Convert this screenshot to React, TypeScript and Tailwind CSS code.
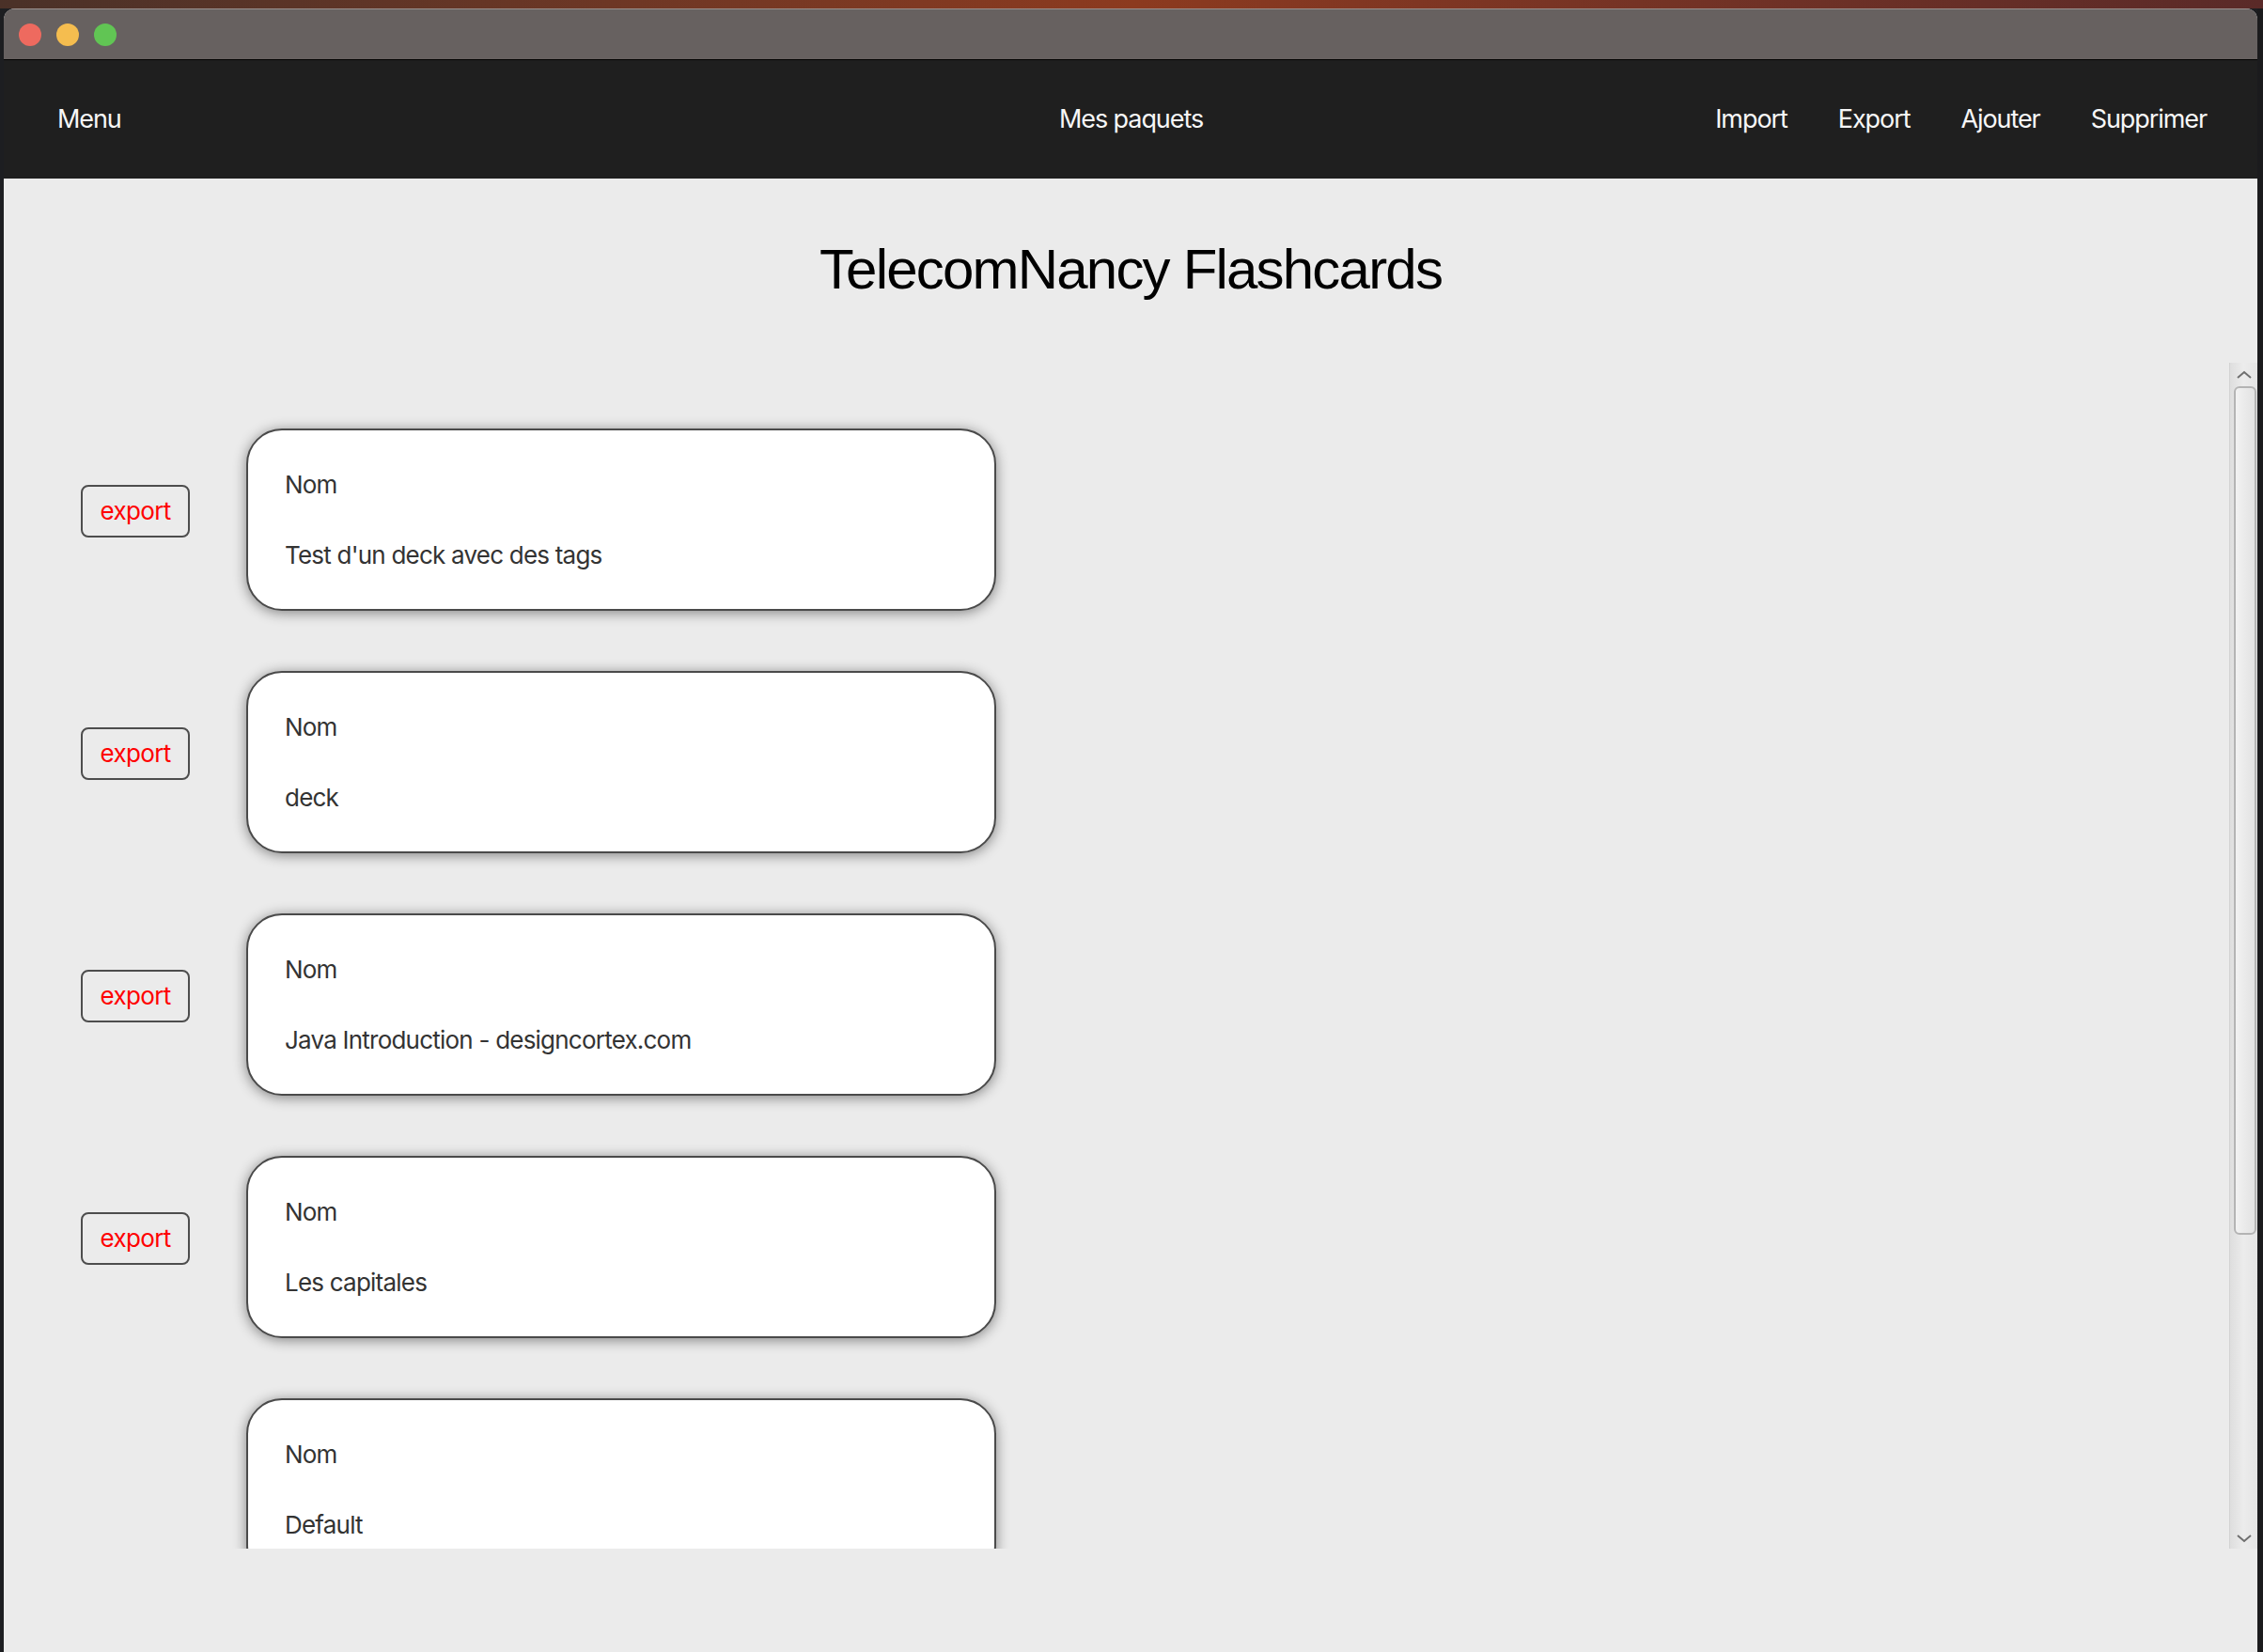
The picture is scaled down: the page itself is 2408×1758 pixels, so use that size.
import React from 'react';

const decks = [
  { name: "Test d'un deck avec des tags", exportable: true },
  { name: 'deck', exportable: true },
  { name: 'Java Introduction - designcortex.com', exportable: true },
  { name: 'Les capitales', exportable: true },
  { name: 'Default', exportable: false },
];

const navRight = ['Import', 'Export', 'Ajouter', 'Supprimer'];

const DeckRow: React.FC<{ name: string; exportable: boolean }> = ({ name, exportable }) => (
  <div className="flex items-start">
    <div className="w-[258px] shrink-0 pl-[82px] pt-[60px]">
      {exportable && (
        <button className="w-[116px] h-[56px] rounded-[8px] border-2 border-[#4d4d4d] bg-transparent text-[26px] text-[#ff0000] tracking-[-0.025em] flex items-center justify-center pb-[2px]">
          export
        </button>
      )}
    </div>
    <div className="w-[798px] h-[194px] shrink-0 rounded-[38px] border-2 border-[#4a4a4a] bg-white shadow-[0_2px_14px_rgba(0,0,0,0.45)] pl-[39px] pt-[42px] text-[26px] leading-[32px] text-[#333333] tracking-[-0.03em]">
      <div>Nom</div>
      <div className="mt-[43px]">{name}</div>
    </div>
  </div>
);

const Chevron: React.FC<{ down?: boolean }> = ({ down }) => (
  <svg width="18" height="10" viewBox="0 0 18 10" className="block">
    <path
      d={down ? 'M2 2 L9 8 L16 2' : 'M2 8 L9 2 L16 8'}
      fill="none"
      stroke="#6f6f6f"
      strokeWidth="2"
    />
  </svg>
);

export default function App() {
  return (
    <div
      className="w-[2408px] h-[1758px] overflow-hidden bg-[#1d1e21] flex flex-col"
      style={{ fontFamily: 'Inter, "Noto Sans", sans-serif' }}
    >
      <div className="h-[9px] shrink-0 bg-gradient-to-r from-[#4a3128] via-[#8c3a1f] to-[#5a2a28]" />
      <div className="flex flex-1 min-h-0 pl-[4px]">
        <div className="w-[2398px] flex flex-col rounded-t-[12px] overflow-hidden bg-[#ebebeb]">
          {/* title bar */}
          <div className="h-[55px] shrink-0 bg-[#676160] border-t border-[#9a9290] border-b border-b-black flex items-center pl-[16px] gap-[16px]">
            <span className="w-[24px] h-[24px] rounded-full bg-[#ee6a5f]" />
            <span className="w-[24px] h-[24px] rounded-full bg-[#f5bd4f]" />
            <span className="w-[24px] h-[24px] rounded-full bg-[#61c554]" />
          </div>

          {/* nav bar */}
          <div className="h-[126px] shrink-0 bg-[#1f1f1f] grid grid-cols-[1fr_auto_1fr] items-center pl-[57px] pr-[54px] text-[27px] text-[#f7f7f7] tracking-[-0.04em]">
            <div>Menu</div>
            <div className="pr-[2px]">Mes paquets</div>
            <div className="flex justify-end gap-[54px]">
              {navRight.map((item) => (
                <span key={item}>{item}</span>
              ))}
            </div>
          </div>

          {/* header */}
          <div className="h-[196px] shrink-0 flex items-center justify-center">
            <h1
              className="text-[60px] leading-none text-black tracking-[-0.03em] pb-[2px]"
              style={{ fontFamily: '"Liberation Sans", Arial, sans-serif' }}
            >
              TelecomNancy Flashcards
            </h1>
          </div>

          {/* scroll pane */}
          <div className="h-[1262px] shrink-0 flex overflow-hidden">
            <div className="flex-1 overflow-hidden pt-[70px] flex flex-col gap-[64px]">
              {decks.map((d) => (
                <DeckRow key={d.name} name={d.name} exportable={d.exportable} />
              ))}
            </div>
            <div className="w-[30px] shrink-0 bg-gradient-to-r from-[#dedede] via-[#ececec] to-[#e4e4e4] border-l border-[#d2d2d2] flex flex-col items-center">
              <div className="h-[25px] flex items-center justify-center">
                <Chevron />
              </div>
              <div className="w-[24px] h-[903px] ml-[2px] rounded-[6px] border-2 border-[#b4b4b4] bg-gradient-to-r from-[#f2f2f2] to-[#e2e2e2]" />
              <div className="flex-1" />
              <div className="h-[22px] flex items-center justify-center">
                <Chevron down />
              </div>
            </div>
          </div>

          <div className="flex-1" />
        </div>
        <div className="flex-1 bg-[#1b1b1d]" />
      </div>
    </div>
  );
}
